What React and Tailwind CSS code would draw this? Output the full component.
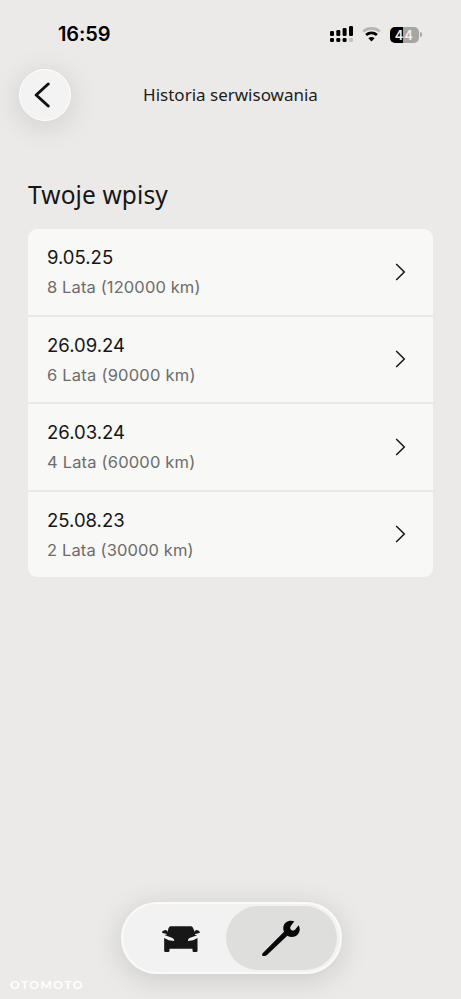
const entries = [
  { date: "9.05.25", info: "8 Lata (120000 km)", spacing: "tracking-[0.12px]" },
  { date: "26.09.24", info: "6 Lata (90000 km)", spacing: "tracking-[0.22px]" },
  { date: "26.03.24", info: "4 Lata (60000 km)", spacing: "tracking-[0.18px]" },
  { date: "25.08.23", info: "2 Lata (30000 km)", spacing: "tracking-[0.12px]" },
];

function StatusBar() {
  return (
    <div className="flex h-[69px] items-start justify-between pl-[58px] pr-[39px] pt-[22px] text-black">
      <span className="font-['Inter',sans-serif] text-[20px] font-semibold leading-[25px] tracking-[-0.1px]">16:59</span>
      <div className="flex items-center pt-[4px]">
        {/* Signal for both SIM cards */}
        <svg width="23" height="17" viewBox="0 0 23 17" className="mr-[9px]">
          <rect x="0" y="5" width="4" height="5" rx="1.3" />
          <rect x="6.3" y="4" width="4" height="6" rx="1.3" />
          <rect x="12.6" y="2" width="4" height="8" rx="1.3" />
          <rect x="19" y="0" width="4" height="10" rx="1.3" />
          <rect x="0" y="12" width="4" height="4" rx="1.3" />
          <rect x="6.3" y="12" width="4" height="4" rx="1.3" />
          <rect x="12.6" y="12" width="4" height="4" rx="1.3" />
          <rect x="19" y="12" width="4" height="4" rx="1.3" fill="#c2c2c1" />
        </svg>
        {/* Wi-Fi */}
        <svg width="19" height="15" viewBox="0 0 19 15" className="mr-[9px]" fill="none">
          <path d="M1.2 4.5C6 0.4 13 0.4 17.8 4.5" stroke="#b5b5b4" strokeWidth="2.7" />
          <path d="M4.1 8C7.2 5.2 11.8 5.2 14.9 8" stroke="#000" strokeWidth="2.7" />
          <path d="M6.4 11.3C8.2 9.7 10.8 9.7 12.6 11.3L9.5 14.5Z" fill="#000" />
        </svg>
        {/* Battery */}
        <div className="flex h-4 w-[29.5px] items-center justify-center rounded-[5px] bg-[linear-gradient(90deg,#000_44%,#a5a5a4_44%)] font-['Inter',sans-serif] text-[13px] font-semibold leading-4 tracking-[0.8px] text-[#f0f0f0]">
          44
        </div>
        <div className="ml-[1px] h-[5px] w-[2px] rounded-r-full bg-[#a5a5a4]" />
      </div>
    </div>
  );
}

function Header() {
  return (
    <header className="grid h-[52px] grid-cols-[52px_1fr_52px] items-center px-[19px]">
      <button className="flex size-[51.5px] items-center justify-center rounded-full border-[1.5px] border-white bg-[#f3f3f3] shadow-[0_5px_30px_rgba(0,0,0,0.13)]">
        <svg width="16" height="26" viewBox="0 0 16 26" className="mr-[5px]" fill="none" stroke="#111" strokeWidth="3" strokeLinecap="round" strokeLinejoin="round">
          <path d="M14.2 2L2.2 13L14.2 24" />
        </svg>
      </button>
      <h1 className="text-center text-[17px] leading-6 text-[#1c1c1c]">Historia serwisowania</h1>
    </header>
  );
}

function Entry({ date, info, spacing }) {
  return (
    <li className="flex h-[85.5px] items-center justify-between bg-[#f8f8f7] pl-[19px] pr-[27px]">
      <div className="pt-[2px] font-['Inter',sans-serif]">
        <p className="text-[18.5px] leading-[29px] text-[#161616]">{date}</p>
        <p className={`text-[16.5px] leading-[30px] text-[#6c6c6b] ${spacing}`}>{info}</p>
      </div>
      <svg width="11" height="18" viewBox="0 0 11 18" fill="none" stroke="#161616" strokeWidth="1.5">
        <path d="M1.2 1L9.3 9L1.2 17" />
      </svg>
    </li>
  );
}

function TabBar() {
  return (
    <nav className="flex h-[72px] w-[221px] items-center rounded-full border-2 border-[#fafafa] bg-[#f2f2f2] pr-[2.5px] shadow-[0_5px_30px_rgba(0,0,0,0.14)]">
      <button className="flex h-full w-[103px] items-center justify-center pl-[13px] pt-[2px]">
        <svg width="38" height="26" viewBox="186 138 113 78" fill="#171717">
          <path d="M211 139H273Q277 139 279 145L284 156Q284 150 289 150L296 152Q300 155 298 159L285 162L284 164L291 166L268 174Q262 178 264 183L279 181L292 174V212Q292 216 288 216H281Q277 216 277 212V206H208V212Q208 216 204 216H196Q192 216 192 212V174L206 181L222 183Q223 178 217 174L193 165L201 163L200 162L187 159Q184 154 189 152L196 150Q202 150 202 156L205 145Q207 139 211 139Z" />
        </svg>
      </button>
      <button className="flex h-16 w-[111px] items-center justify-center rounded-full bg-[#dededd]">
        <svg width="38" height="37" viewBox="488 120 114 111" fill="#080808">
          <path d="M585 124C573 119 557 124 553 137Q550 146 554 155L490 220Q486 226 491 228Q498 229 502 226L564 167C574 173 589 172 597 161C603 153 602 143 598 136L587 149Q580 154 575 149Q570 144 575 137Z" />
        </svg>
      </button>
    </nav>
  );
}

export default function App() {
  return (
    <div className="flex h-[999px] w-full flex-col overflow-hidden bg-[#ebeae9] font-['Noto_Sans',sans-serif]">
      <StatusBar />
      <Header />

      <main className="flex-1 px-7 pt-[57px]">
        <h2 className="text-[24.5px] leading-[33px] tracking-[0.12px] text-[#161616]">Twoje wpisy</h2>
        <ul className="mt-[18px] flex flex-col gap-[2px] overflow-hidden rounded-[9px] bg-[#e9e9e8]">
          {entries.map((entry) => (
            <Entry key={entry.date} {...entry} />
          ))}
        </ul>
      </main>

      <footer className="relative flex justify-center pb-[25px] pl-px">
        <TabBar />
        <span className="absolute bottom-[5px] left-[10px] font-['Lato',sans-serif] text-[12px] font-bold leading-[18px] tracking-[1.5px] text-white">
          OTOMOTO
        </span>
      </footer>
    </div>
  );
}
